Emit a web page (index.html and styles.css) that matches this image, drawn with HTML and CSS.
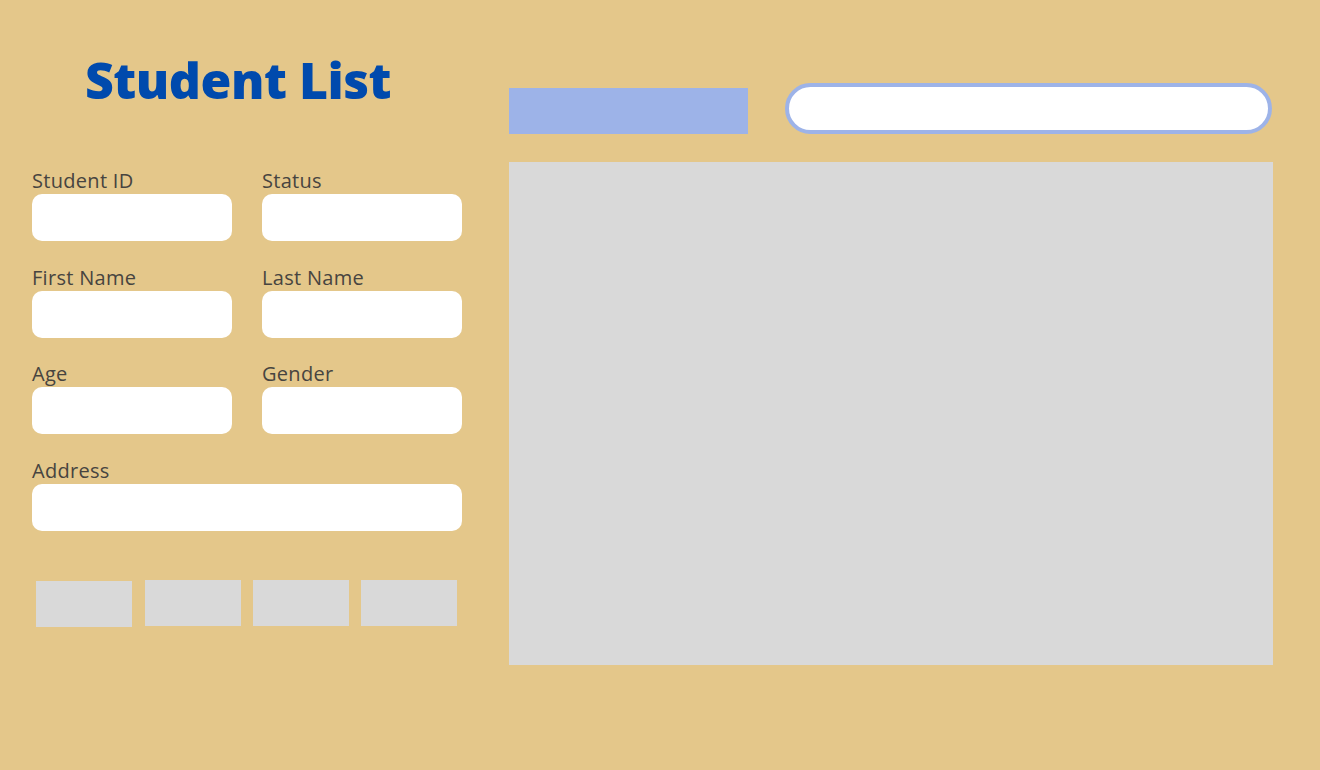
FILE: index.html
```html
<!DOCTYPE html>
<html lang="en">
<head>
<meta charset="utf-8">
<title>Student List</title>
<link rel="stylesheet" href="styles.css">
</head>
<body>
<div class="page">
  <section class="left">
    <h1 class="title">Student List</h1>
    <form class="form">
      <div class="field"><label class="label">Student ID</label><input class="input" type="text"></div>
      <div class="field"><label class="label">Status</label><input class="input" type="text"></div>
      <div class="field"><label class="label">First Name</label><input class="input" type="text"></div>
      <div class="field"><label class="label">Last Name</label><input class="input" type="text"></div>
      <div class="field"><label class="label">Age</label><input class="input" type="text"></div>
      <div class="field"><label class="label">Gender</label><input class="input" type="text"></div>
      <div class="field wide"><label class="label">Address</label><input class="input" type="text"></div>
    </form>
    <div class="buttons">
      <button class="btn first" type="button"></button>
      <button class="btn" type="button"></button>
      <button class="btn" type="button"></button>
      <button class="btn" type="button"></button>
    </div>
  </section>
  <section class="right">
    <div class="toolbar">
      <div class="tab"></div>
      <input class="search" type="text">
    </div>
    <div class="panel"></div>
  </section>
</div>
</body>
</html>
```

FILE: styles.css
```css
* { box-sizing: border-box; }
html, body { margin: 0; padding: 0; }
body {
  background: #E4C78A;
  font-family: "Open Sans", "Liberation Sans", sans-serif;
  width: 1320px;
  height: 770px;
  overflow: hidden;
}
.page {
  display: flex;
  align-items: flex-start;
}
.left {
  width: 430px;
  margin-left: 32px;
}
.title {
  margin: 0;
  padding-top: 48px;
  padding-left: 53px;
  font-size: 50px;
  line-height: 64px;
  font-weight: 800;
  color: #004AAD;
  letter-spacing: -0.5px;
  white-space: nowrap;
}
.form {
  display: grid;
  grid-template-columns: 200px 200px;
  column-gap: 30px;
  row-gap: 23.6px;
  margin-top: 56px;
}
.field {
  display: flex;
  flex-direction: column;
}
.field.wide {
  grid-column: span 2;
}
.label {
  display: block;
  height: 26px;
  font-size: 20px;
  line-height: 26px;
  letter-spacing: 0.3px;
  color: #474440;
  white-space: nowrap;
}
.input {
  display: block;
  width: 100%;
  height: 47px;
  border: none;
  border-radius: 10px;
  background: #FFFFFF;
  outline: none;
  padding: 0 12px;
  font: inherit;
}
.buttons {
  display: flex;
  gap: 12px;
  margin-top: 49px;
  padding-left: 4px;
}
.btn {
  width: 96px;
  height: 46px;
  border: none;
  padding: 0;
  background: #D9D9D9;
}
.btn.first {
  margin-top: 1px;
  margin-right: 1px;
}
.right {
  width: 764px;
  margin-left: 47px;
}
.toolbar {
  display: flex;
  align-items: flex-start;
  margin-top: 83px;
}
.tab {
  width: 239px;
  height: 46px;
  margin-top: 5px;
  background: #9DB3E8;
}
.search {
  margin-left: 37px;
  width: 487px;
  height: 51px;
  border: 4px solid #9DB3E8;
  border-radius: 26px;
  background: #FFFFFF;
  outline: none;
  padding: 0 20px;
}
.panel {
  margin-top: 28px;
  height: 503px;
  background: #D9D9D9;
}
```
